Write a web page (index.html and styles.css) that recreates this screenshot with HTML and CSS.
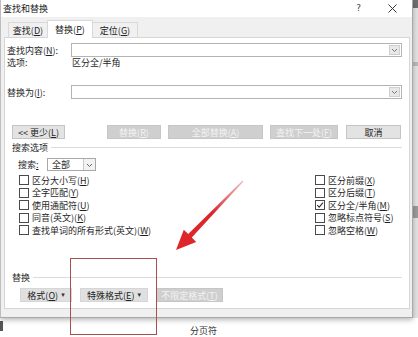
FILE: index.html
```html
<!DOCTYPE html>
<html lang="zh-CN">
<head>
<meta charset="utf-8">
<title>查找和替换</title>
<link rel="stylesheet" href="styles.css">
</head>
<body>
<div class="screen">
  <div class="top">
    <div class="dialog">
      <div class="titlebar">
        <span class="title">查找和替换</span>
        <span class="help">?</span>
        <svg class="close" width="9" height="9" viewBox="0 0 9 9"><path d="M0.5 0.5 L8.5 8.5 M8.5 0.5 L0.5 8.5" stroke="#333" stroke-width="1" fill="none"/></svg>
      </div>
      <div class="tabs">
        <div class="tab t1">查找(<u>D</u>)</div>
        <div class="tab t2 active">替换(<u>P</u>)</div>
        <div class="tab t3">定位(<u>G</u>)</div>
      </div>
      <div class="panel">
        <div class="row field first">
          <span class="lbl">查找内容(<u>N</u>):</span>
          <div class="combo">
            <span class="drop"><svg width="9" height="8" viewBox="0 0 9 8"><path d="M2 3 L4.5 5.5 L7 3" stroke="#777" fill="none"/></svg></span>
          </div>
        </div>
        <div class="row opts">
          <span class="lbl">选项:</span>
          <span class="optval">区分全/半角</span>
        </div>
        <div class="row field second">
          <span class="lbl">替换为(<u>I</u>):</span>
          <div class="combo">
            <span class="drop"><svg width="9" height="8" viewBox="0 0 9 8"><path d="M2 3 L4.5 5.5 L7 3" stroke="#777" fill="none"/></svg></span>
          </div>
        </div>
        <div class="row btnrow">
          <span class="btn b-less">&lt;&lt; 更少(<u>L</u>)</span>
          <span class="btn dis b-rep">替换(<u>R</u>)</span>
          <span class="btn dis b-all">全部替换(<u>A</u>)</span>
          <span class="btn dis b-next">查找下一处(<u>F</u>)</span>
          <span class="btn b-cancel">取消</span>
        </div>
        <div class="row group g-search">
          <span class="gtitle">搜索选项</span>
          <span class="gline"></span>
        </div>
        <div class="row searchrow">
          <span class="slbl">搜索<u>:</u></span>
          <div class="select">
            <span class="selval">全部</span>
            <span class="seldrop"><svg width="9" height="8" viewBox="0 0 9 8"><path d="M2 3 L4.5 5.5 L7 3" stroke="#666" fill="none"/></svg></span>
          </div>
        </div>
        <div class="checks">
          <div class="col left">
            <div class="chk"><span class="box"></span>区分大小写(<u>H</u>)</div>
            <div class="chk"><span class="box"></span>全字匹配(<u>Y</u>)</div>
            <div class="chk"><span class="box"></span>使用通配符(<u>U</u>)</div>
            <div class="chk"><span class="box"></span>同音(英文)(<u>K</u>)</div>
            <div class="chk"><span class="box"></span>查找单词的所有形式(英文)(<u>W</u>)</div>
          </div>
          <div class="col right">
            <div class="chk"><span class="box"></span>区分前缀(<u>X</u>)</div>
            <div class="chk"><span class="box"></span>区分后缀(<u>T</u>)</div>
            <div class="chk"><span class="box on"><svg width="8" height="8" viewBox="0 0 8 8"><path d="M1.2 4.2 L3.2 6.2 L7 1.6" stroke="#333" stroke-width="1.1" fill="none"/></svg></span>区分全/半角(<u>M</u>)</div>
            <div class="chk"><span class="box"></span>忽略标点符号(<u>S</u>)</div>
            <div class="chk"><span class="box"></span>忽略空格(<u>W</u>)</div>
          </div>
        </div>
        <div class="bottom">
          <div class="row group g-rep">
            <span class="gtitle">替换</span>
            <span class="gline"></span>
          </div>
          <div class="row fmtrow">
            <span class="btn fb b-fmt">格式(<u>O</u>) <span class="tri">▾</span></span>
            <span class="btn fb b-spec">特殊格式(<u>E</u>) <span class="tri">▾</span></span>
            <span class="btn dis b-nofmt">不限定格式(<u>T</u>)</span>
          </div>
        </div>
      </div>
    </div>
    <div class="strip">
      <span class="s-top"></span>
      <span class="s-mid"></span>
      <span class="s-low"></span>
    </div>
  </div>
  <div class="below">
    <span class="mark"></span>
    <span class="pagebreak">分页符</span>
  </div>

  <svg class="arrow" width="418" height="337" viewBox="0 0 418 337">
    <defs>
      <linearGradient id="ag" x1="243" y1="181" x2="176" y2="250" gradientUnits="userSpaceOnUse">
        <stop offset="0" stop-color="#e86a6a" stop-opacity="0.5"/>
        <stop offset="0.45" stop-color="#d8282c"/>
        <stop offset="1" stop-color="#e0262a"/>
      </linearGradient>
    </defs>
    <polygon points="243.4,181.4 191.8,237.6 196.2,241.9 176,250 183.8,229.7 188.2,234.0 242.6,180.6" fill="url(#ag)"/>
  </svg>
  <div class="redbox"></div>
</div>
</body>
</html>
```

FILE: styles.css
```css
* {
  box-sizing: border-box;
  margin: 0;
  padding: 0;
}

html, body {
  width: 418px;
  height: 337px;
  overflow: hidden;
  background: #ffffff;
}

body {
  font-family: "Noto Sans CJK SC", "Noto Sans", sans-serif;
  font-size: 9px;
  line-height: 1;
  color: #1f1f1f;
}

u {
  text-decoration: underline;
  text-underline-offset: 1px;
}

.screen {
  position: relative;
  width: 418px;
  height: 337px;
}

.top {
  display: flex;
  height: 318px;
}

/* ---------- dialog ---------- */
.dialog {
  width: 413px;
  height: 318px;
  background: #f0f0f0;
  border-left: 1px solid #bdbdbd;
  border-right: 1px solid #a9a9a9;
  border-bottom: 1px solid #a9a9a9;
  display: flex;
  flex-direction: column;
  box-shadow: 0 2px 5px rgba(0, 0, 0, 0.28);
  position: relative;
  z-index: 1;
}

.titlebar {
  height: 17px;
  background: #ffffff;
  display: flex;
  align-items: center;
  padding-left: 2px;
}

.title {
  color: #222;
}

.help {
  margin-left: auto;
  margin-right: 27px;
  color: #444;
  font-family: "DejaVu Sans", sans-serif;
  font-size: 9px;
}

.close {
  margin-right: 15px;
}

.tabs {
  height: 20px;
  display: flex;
  align-items: flex-end;
  padding-left: 7px;
}

.tab {
  height: 15px;
  display: flex;
  align-items: center;
  justify-content: center;
  border: 1px solid #d9d9d9;
  border-bottom: none;
  background: #f0f0f0;
  color: #222;
  padding-top: 1px;
}

.t1 { width: 39px; border-right: none; }
.t2 { width: 46px; }
.t3 { width: 45px; border-left: none; }

.tab.active {
  height: 18px;
  background: #ffffff;
  margin-bottom: -1px;
  position: relative;
  z-index: 2;
  padding-top: 0;
  align-items: center;
  padding-bottom: 1px;
}

.panel {
  height: 272px;
  margin: 0 2px 0 3px;
  background: #ffffff;
  border: 1px solid #d6d6d6;
  display: flex;
  flex-direction: column;
  padding-bottom: 6px;
}

.row {
  display: flex;
  align-items: center;
}

.field {
  height: 14px;
  padding-left: 2px;
}

.field.first { margin-top: 5px; }
.field.second { margin-top: 17px; }

.lbl {
  width: 64px;
  flex: none;
}

.combo {
  width: 331px;
  height: 14px;
  border: 1px solid #b4b4b4;
  display: flex;
  justify-content: flex-end;
  align-items: center;
  padding-right: 1px;
}

.drop {
  width: 11px;
  height: 10px;
  background: #e8e8e8;
  border: 1px solid #cfcfcf;
  display: flex;
  align-items: center;
  justify-content: center;
}

.opts {
  height: 11px;
  padding-left: 2px;
}

.optval {
  padding-left: 1px;
}

.btnrow {
  margin-top: 26px;
  height: 14px;
  padding-left: 7px;
}

.btn {
  height: 14px;
  display: flex;
  align-items: center;
  justify-content: center;
  background: #e3e3e3;
  border: 1px solid #c4c4c4;
  color: #222;
  white-space: nowrap;
  flex: none;
}

.btn.dis {
  background: #cfcfcf;
  border-color: #c6c6c6;
  color: #f3f3f3;
}

.b-less { width: 53px; margin-right: 42px; }
.b-rep { width: 54px; margin-right: 7px; }
.b-all { width: 95px; margin-right: 7px; }
.b-next { width: 68px; margin-right: 8px; }
.b-cancel { width: 55px; }

.group {
  height: 12px;
  padding-left: 7px;
  padding-right: 7px;
}

.g-search { margin-top: 2px; }

.gtitle {
  flex: none;
}

.gline {
  flex: 1;
  height: 1px;
  background: #dcdcdc;
  margin-left: 3px;
  margin-top: 1px;
}

.searchrow {
  margin-top: 5px;
  height: 13px;
  padding-left: 13px;
}

.slbl {
  width: 29px;
  flex: none;
}

.select {
  width: 49px;
  height: 13px;
  border: 1px solid #a8a8a8;
  display: flex;
  align-items: center;
}

.selval {
  flex: 1;
  padding-left: 4px;
}

.seldrop {
  width: 12px;
  height: 11px;
  border-left: 1px solid #c8c8c8;
  background: #f2f2f2;
  display: flex;
  align-items: center;
  justify-content: center;
}

.checks {
  margin-top: 3px;
  display: flex;
}

.col.left {
  padding-left: 14px;
}

.col.right {
  margin-left: auto;
  width: 94px;
}

.chk {
  height: 12.5px;
  display: flex;
  align-items: center;
  white-space: nowrap;
}

.box {
  width: 10px;
  height: 10px;
  border: 1px solid #4a4a4a;
  background: #fff;
  margin-right: 3px;
  flex: none;
  display: flex;
  align-items: center;
  justify-content: center;
}

.bottom {
  margin-top: auto;
}

.fmtrow {
  margin-top: 5px;
  height: 14px;
  padding-left: 15px;
}

.btn.fb {
  background: #e0e0e0;
  border-color: #d6d6d6;
}

.tri {
  font-size: 7px;
  margin-left: 3px;
  color: #333;
  font-family: "DejaVu Sans", sans-serif;
}

.b-fmt { width: 52px; margin-right: 8px; }
.b-spec { width: 68px; margin-right: 8px; }
.b-nofmt { width: 67px; }

/* ---------- background app ---------- */
.strip {
  width: 5px;
  height: 318px;
  background: #e2e2e2;
  display: flex;
  flex-direction: column;
}

.s-top {
  height: 8px;
  background: #6e6e6e;
}

.s-mid {
  height: 4px;
  margin-top: 54px;
  background: #b9b9b9;
}

.s-low {
  height: 12px;
  margin-top: 140px;
  background: #9a9a9a;
}

.below {
  height: 19px;
  display: flex;
  align-items: flex-start;
}

.mark {
  width: 3px;
  height: 10px;
  margin-top: 3px;
  background: #555;
}

.pagebreak {
  margin-left: 187px;
  margin-top: 8px;
  color: #333;
}

/* ---------- annotation overlays ---------- */
.arrow {
  position: absolute;
  left: 0;
  top: 0;
  pointer-events: none;
  z-index: 5;
}

.redbox {
  position: absolute;
  left: 70px;
  top: 258px;
  width: 87px;
  height: 77px;
  border: 1px solid #a85050;
  z-index: 6;
  pointer-events: none;
}
```
